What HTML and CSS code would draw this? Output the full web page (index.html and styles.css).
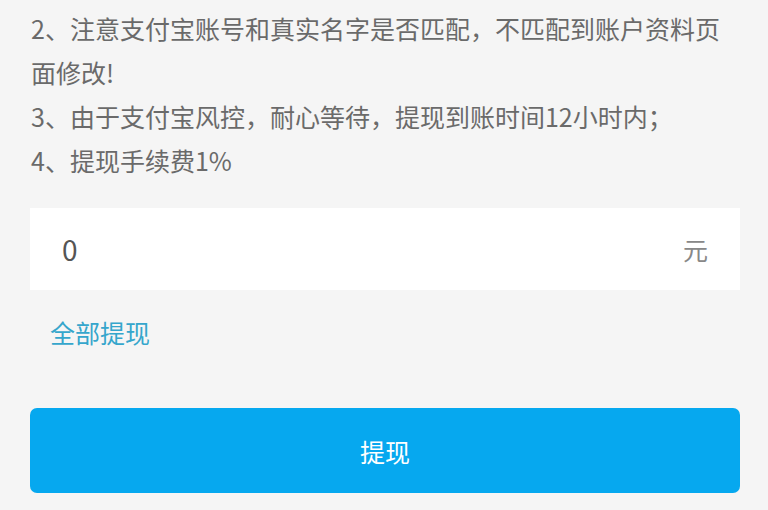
FILE: index.html
```html
<!DOCTYPE html>
<html lang="zh-CN">
<head>
<meta charset="utf-8">
<title>提现</title>
<link rel="stylesheet" href="styles.css">
</head>
<body>
<div class="page">
  <div class="notes">
    <p>2、注意支付宝账号和真实名字是否匹配，不匹配到账户资料页面修改!</p>
    <p>3、由于支付宝风控，耐心等待，提现到账时间12小时内；</p>
    <p>4、提现手续费1%</p>
  </div>
  <div class="amount">
    <span class="value">0</span>
    <span class="unit">元</span>
  </div>
  <div class="all"><span>全部提现</span></div>
  <button class="submit" type="button">提现</button>
</div>
</body>
</html>
```

FILE: styles.css
```css
html, body {
  margin: 0;
  padding: 0;
  background: #f5f5f5;
}
body {
  width: 768px;
  height: 510px;
  overflow: hidden;
  font-family: "Noto Sans CJK SC", "Noto Sans", sans-serif;
}
.page {
  padding: 6px 28px 0 30px;
  box-sizing: border-box;
}
.notes {
  padding-left: 1px;
  color: #6a6a6a;
  font-size: 25px;
  line-height: 44px;
}
.notes p {
  margin: 0;
}
.amount {
  margin-top: 26px;
  height: 82px;
  background: #fff;
  display: flex;
  align-items: center;
  justify-content: space-between;
  padding: 0 32px 0 32px;
}
.value {
  font-size: 28px;
  color: #555;
}
.unit {
  font-size: 25px;
  color: #888;
}
.all {
  margin-top: 20px;
  padding-left: 20px;
  font-size: 25px;
  line-height: 44px;
  color: #35a6cc;
}
.submit {
  display: block;
  width: 100%;
  margin-top: 54px;
  height: 85px;
  border: none;
  border-radius: 7px;
  background: #06a8ef;
  color: #fff;
  font-family: "Noto Sans CJK SC", "Noto Sans", sans-serif;
  font-size: 25px;
  padding: 0;
}
```
